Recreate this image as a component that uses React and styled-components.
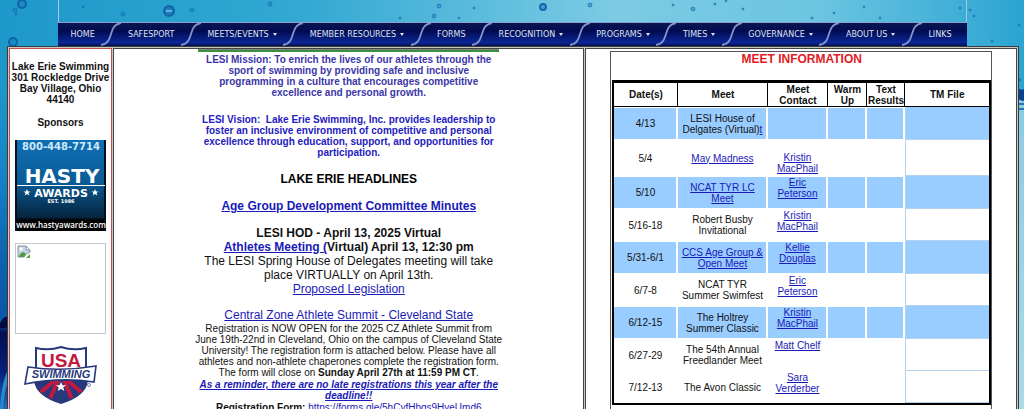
import React from "react";
import styled, { createGlobalStyle } from "styled-components";

const GlobalStyle = createGlobalStyle`
    * {
        box-sizing: border-box;
    }
    html {
        scrollbar-width: none;
    }
    body {
        margin: 0;
        background: #8fcbe4;
        font-family: "Liberation Sans", Arial, sans-serif;
        font-size: 10px;
        line-height: 11px;
        color: #111;
    }
    a {
        color: #1a1ab8;
    }
`;

const Page = styled.div`
    position: relative;
    min-height: 100vh;
    overflow: hidden;
`;

const Water = styled.svg`
    position: absolute;
    inset: 0;
    width: 100%;
    height: 409px;
    z-index: -1;
`;

const Banner = styled.header`
    height: 22px;
    margin: 0 57px 0 58px;
    border: solid #a9c4e4;
    border-width: 0 1px;
`;

const Nav = styled.nav`
    display: flex;
    height: 24px;
    margin: 0 57px 0 58px;
    padding: 0 12px 0 9px;
    border-top: 1px solid #8d9fd0;
    background: linear-gradient(#0a1650, #020b52 35%, #0a2796 85%, #03104c);
`;

const NavLink = styled.a`
    flex: 1 1 auto;
    display: flex;
    align-items: center;
    justify-content: center;
    gap: 4px;
    color: #dfe3f3;
    font-family: "DejaVu Sans", Verdana, sans-serif;
    font-size: 8px;
    text-decoration: none;
    white-space: nowrap;
`;

const Caret = styled.span`
    border: solid transparent;
    border-width: 3px 2px 0;
    border-top-color: #dfe3f3;
`;

const Divider = styled.svg`
    flex: none;
    width: 20px;
    height: 23px;
    margin: 0 3px;
`;

const Frame = styled.div`
    display: grid;
    grid-template-columns: 103px minmax(0, 472fr) minmax(0, 432fr);
    gap: 1px;
    margin: 0 5px 0 7px;
    padding: 1px;
    border: 1px solid #3a3a3a;
    background: #c9c9c2;
`;

const Column = styled.div`
    background: #fff;
    border: 1px solid ${({ $color }) => $color || "#444"};
    text-align: center;
`;

const Sidebar = styled(Column)`
    display: flex;
    flex-direction: column;
    align-items: center;
    padding-top: 12px;
`;

const Address = styled.address`
    font-style: normal;
    font-weight: bold;
    white-space: nowrap;
`;

const SponsorTitle = styled.h2`
    margin: 12px 0;
    font-size: 10px;
    line-height: 11px;
`;

const Sponsor = styled.a`
    display: block;
    width: 91px;
    height: 91px;
    margin-bottom: 12px;
`;

const Missing = styled(Sponsor)`
    border: 1px solid #c3c6cc;
    padding: 1px;
    text-align: left;
`;

const News = styled(Column)`
    display: flex;
    flex-direction: column;
    align-items: center;
    white-space: nowrap;
`;

const Rule = styled.hr`
    width: 301px;
    height: 3px;
    margin: 0;
    border: solid #7d8a7a;
    border-width: 1px 0 0;
    background: #3c9040;
`;

const Statement = styled.p`
    margin: 2px 0 14px;
    color: ${({ $color }) => $color};
    font-weight: bold;
`;

const Headline = styled.h2`
    margin: 0 0 13px;
    color: #000;
    font-size: 12px;
    line-height: 14px;
`;

const Lead = styled.p`
    margin: ${({ $gap }) => $gap || "0"} 0 0;
    font-size: 12px;
    line-height: 14px;
`;

const Body = styled.p`
    margin: 1px 0 0;
    line-height: 11px;
`;

const Meets = styled(Column)`
    padding: 2px 24px 0;
`;

const MeetBox = styled.section`
    border: 1px solid #555;
    padding: 0 0 8px 1px;
`;

const MeetTitle = styled.h2`
    margin: 0 0 14px;
    color: #e31b23;
    font-size: 12px;
    line-height: 14px;
`;

const Table = styled.table`
    width: 100%;
    table-layout: fixed;
    border: 3px solid #000;
    border-width: 3px 2px 2px;
    border-spacing: 0;
`;

const Th = styled.th`
    width: ${({ $w }) => $w};
    height: 24px;
    padding: 0;
    border: solid #000;
    border-width: 0 1px 1px 0;
    &:last-child {
        border-right-width: 0;
    }
`;

const Row = styled.tr`
    height: ${({ $tall, $blue }) => ($tall ? "36px" : $blue ? "33px" : "32px")};
    td {
        background: ${({ $blue }) => ($blue ? "#99ccff" : "#fff")};
    }
`;

const Td = styled.td`
    padding: 0;
    vertical-align: ${({ $top }) => ($top ? "top" : "middle")};
    border: solid #fff;
    border-width: 1px 2px 1px 0;
    white-space: nowrap;
`;

const FileTd = styled.td`
    padding: 0;
    border: solid #b5d2ec;
    border-width: 0 0 1px 1px;
`;

const links = [
    { label: "HOME" },
    { label: "SAFESPORT" },
    { label: "MEETS/EVENTS", menu: true },
    { label: "MEMBER RESOURCES", menu: true },
    { label: "FORMS" },
    { label: "RECOGNITION", menu: true },
    { label: "PROGRAMS", menu: true },
    { label: "TIMES", menu: true },
    { label: "GOVERNANCE", menu: true },
    { label: "ABOUT US", menu: true },
    { label: "LINKS" },
];

const meets = [
    { date: "4/13", name: ["LESI House of", "Delgates (Virtual)"], tail: "t" },
    { date: "5/4", name: ["May Madness"], href: true, contact: ["", "Kristin", "MacPhail"] },
    { date: "5/10", name: ["NCAT TYR LC", "Meet"], href: true, contact: ["Eric", "Peterson"] },
    { date: "5/16-18", name: ["Robert Busby", "Invitational"], contact: ["Kristin", "MacPhail"] },
    { date: "5/31-6/1", name: ["CCS Age Group &", "Open Meet"], href: true, contact: ["Kellie", "Douglas"] },
    { date: "6/7-8", name: ["NCAT TYR", "Summer Swimfest"], contact: ["Eric", "Peterson"] },
    { date: "6/12-15", name: ["The Holtrey", "Summer Classic"], contact: ["Kristin", "MacPhail"] },
    { date: "6/27-29", name: ["The 54th Annual", "Freedlander Meet"], contact: ["Matt Chelf"] },
    { date: "7/12-13", name: ["The Avon Classic"], contact: ["Sara", "Verderber"] },
];

// x, y, radius
const bubbles = [
    [22, 4, 4], [15, 10, 2], [16, 14, 1], [13, 42, 4], [83, 7, 1], [123, 14, 2], [169, 11, 5],
    [192, 10, 2], [270, 4, 2], [400, 18, 1], [434, 16, 2], [439, 6, 2], [459, 18, 1], [474, 8, 1],
    [543, 7, 3], [590, 5, 2], [673, 5, 1], [693, 9, 2], [715, 4, 1], [726, 1, 1], [743, 9, 1],
    [812, 18, 1], [834, 13, 1], [864, 7, 1], [880, 18, 1], [960, 8, 1], [970, 10, 1], [974, 16, 1],
    [992, 41, 1], [1019, 25, 1], [1020, 80, 1],
];

const WaterArt = () => (
    <Water viewBox="0 0 1024 409" preserveAspectRatio="none" aria-hidden="true">
        <defs>
            <linearGradient id="sea" x1="0" x2="1" y1="0" y2="0">
                <stop offset="0" stopColor="#1e98ca" />
                <stop offset="0.3" stopColor="#33a9d3" />
                <stop offset="0.6" stopColor="#7ccbe4" />
                <stop offset="0.8" stopColor="#6cc5e1" />
                <stop offset="1" stopColor="#2ba4d2" />
            </linearGradient>
            <linearGradient id="deep" x1="0" x2="0" y1="0" y2="1">
                <stop offset="0.1" stopColor="#1e98ca" />
                <stop offset="0.35" stopColor="#1683c6" />
                <stop offset="0.6" stopColor="#0c62ae" />
                <stop offset="0.76" stopColor="#0a57a8" />
                <stop offset="0.79" stopColor="#04104f" />
                <stop offset="0.9" stopColor="#05207c" />
                <stop offset="1" stopColor="#1a6fbe" />
            </linearGradient>
            <linearGradient id="shore" x1="0" x2="0" y1="0" y2="1">
                <stop offset="0" stopColor="#8acbe2" />
                <stop offset="1" stopColor="#a9dbe9" />
            </linearGradient>
        </defs>
        <rect width="1024" height="409" fill="url(#sea)" />
        <rect y="46" width="8" height="363" fill="url(#deep)" />
        <path d="M0 323Q5 315 8 317V328H0Z" fill="#030b40" />
        <path d="M0 409Q2 380 8 370V382Q4 392 3 409Z" fill="#2b86cf" />
        <rect x="1018" y="100" width="6" height="309" fill="url(#shore)" />
        <path d="M1018 88Q1021 91 1024 89V101Q1020 101 1018 98Z" fill="#0a3f96" />
        <path d="M1018 104H1024M1018 109H1024" stroke="#1e78bc" strokeWidth="2" />
        {bubbles.map(([x, y, r]) => (
            <circle key={`${x}-${y}`} cx={x} cy={y} r={r} fill="#1b7dbb" fillOpacity={r > 4 ? 1 : 0.5} stroke="#0e5fa6" strokeWidth={r > 2 ? 2 : 1} strokeOpacity={r > 2 ? 0.9 : 0.55} />
        ))}
        <path d="M166 11H172" stroke="#7cc4ea" strokeWidth="1.5" />
    </Water>
);

const Curve = () => (
    <Divider viewBox="0 0 20 23" aria-hidden="true">
        <path d="M0 22C14 20 6 2 20 0" fill="none" stroke="#8795c8" strokeWidth="1.8" />
    </Divider>
);

const HastyLogo = () => (
    <svg width="91" height="91" viewBox="0 0 91 91" role="img" aria-label="Hasty Awards">
        <defs>
            <linearGradient id="hasty" x1="0" x2="0" y1="0" y2="1">
                <stop offset="0" stopColor="#0f6fb4" />
                <stop offset="0.45" stopColor="#0b5d98" />
                <stop offset="0.85" stopColor="#06253f" />
                <stop offset="0.88" stopColor="#000" />
            </linearGradient>
        </defs>
        <rect width="91" height="91" fill="#04101c" />
        <rect x="2" width="87" height="91" fill="url(#hasty)" />
        <g fill="#fff" textAnchor="middle" fontFamily="DejaVu Sans, sans-serif">
            <text x="46" y="10" fontSize="10" fontWeight="bold" fill="#cfe8fa">800-448-7714</text>
            <text x="47" y="43" fontSize="20" fontWeight="bold">HASTY</text>
            <rect x="2" y="45" width="88" height="1" />
            <text x="46" y="57" fontSize="11" fontWeight="bold">AWARDS</text>
            <text x="46" y="63" fontSize="5" fontWeight="bold">EST. 1986</text>
            <path d="M12 49l1 2.500h2.500l-2 1.600.8 2.500-2.300-1.500-2.300 1.500.8-2.500-2-1.600h2.500zM80 49l1 2.500h2.500l-2 1.600.8 2.500-2.300-1.500-2.300 1.500.8-2.500-2-1.600h2.500z" />
            <text x="46" y="88" fontSize="8" fontFamily="Open Sans, sans-serif" fontWeight="600">www.hastyawards.com</text>
        </g>
    </svg>
);

const BrokenImage = () => (
    <svg width="14" height="14" viewBox="0 0 14 14" aria-hidden="true">
        <path d="M1 1H9L13 5V7L9 9 7 12H1Z" fill="#c5d8f2" stroke="#8a9099" />
        <path d="M9 1V5H13Z" fill="#fff" stroke="#8a9099" />
        <path d="M2 12Q3 7 7 7L9 9 7 12ZM13 9V13H9Z" fill="#4fa045" />
        <circle cx="4" cy="4" r="1.500" fill="#fff" />
    </svg>
);

const UsaLogo = () => (
    <svg width="74" height="58" viewBox="0 0 74 58" role="img" aria-label="USA Swimming">
        <defs>
            <clipPath id="shield">
                <path d="M11 35H63Q62 49 37 56Q12 49 11 35Z" />
            </clipPath>
        </defs>
        <path d="M12 2Q25 5 37 1Q49 5 62 2V24H12Z" fill="#fff" stroke="#27397a" strokeWidth="2" />
        <path d="M10 34H64Q63 50 37 58Q11 50 10 34Z" fill="#27397a" />
        <g clipPath="url(#shield)" stroke="#c4193f" strokeWidth="4">
            <path d="M31 34L10 52M34 34L24 58M40 34L50 58M43 34L64 52" />
        </g>
        <path d="M37 36l1.500 3.300h3.500l-2.700 2.300 1 3.500-3.300-2-3.300 2 1-3.500-2.700-2.300h3.500z" fill="#fff" />
        <path d="M4 21Q37 26 72 20L70 36Q37 31 1 38Z" fill="#fff" stroke="#27397a" strokeWidth="1.600" />
        <g textAnchor="middle" fontFamily="Liberation Sans, Arial, sans-serif" fontWeight="bold">
            <text x="37" y="21" fontSize="19" fill="#c4193f">USA</text>
            <text x="37" y="32" fontSize="11" fontStyle="italic" fill="#27397a">SWIMMING</text>
        </g>
        <circle cx="65" cy="39" r="1.500" fill="none" stroke="#27397a" strokeWidth="0.600" />
    </svg>
);

const Lines = ({ text }) =>
    text.map((line, i) => (
        <React.Fragment key={i}>
            {i > 0 && <br />}
            {line}
        </React.Fragment>
    ));

const NavBar = () => (
    <Nav>
        {links.map(({ label, menu }, i) => (
            <React.Fragment key={label}>
                {i > 0 && <Curve />}
                <NavLink href="#">
                    {label}
                    {menu && <Caret />}
                </NavLink>
            </React.Fragment>
        ))}
    </Nav>
);

const MeetTable = () => (
    <Table>
        <thead>
            <tr>
                <Th $w="64px">Date(s)</Th>
                <Th $w="90px">Meet</Th>
                <Th $w="60px">Meet<br />Contact</Th>
                <Th $w="39px">Warm<br />Up</Th>
                <Th $w="38px">Text<br />Results</Th>
                <Th>TM File</Th>
            </tr>
        </thead>
        <tbody>
            {meets.map(({ date, name, href, tail, contact }, i) => (
                <Row key={date} $blue={i % 2 === 0 && i < 8} $tall={i === 1}>
                    <Td>{date}</Td>
                    <Td>
                        {href ? <a href="#"><Lines text={name} /></a> : <Lines text={name} />}
                        {tail && <a href="#">{tail}</a>}
                    </Td>
                    <Td $top>{contact && <a href="#"><Lines text={contact} /></a>}</Td>
                    <Td />
                    <Td />
                    <FileTd />
                </Row>
            ))}
        </tbody>
    </Table>
);

const App = () => {
    return (
        <Page>
            <GlobalStyle />
            <WaterArt />
            <Banner />
            <NavBar />
            <Frame>
                <Sidebar $color="#c0504d">
                    <Address>
                        Lake Erie Swimming<br />
                        301 Rockledge Drive<br />
                        Bay Village, Ohio<br />
                        44140
                    </Address>
                    <SponsorTitle>Sponsors</SponsorTitle>
                    <Sponsor href="#"><HastyLogo /></Sponsor>
                    <Missing href="#"><BrokenImage /></Missing>
                    <a href="#"><UsaLogo /></a>
                </Sidebar>
                <News>
                    <Rule />
                    <Statement $color="#3b36a8">
                        LESI Mission: To enrich the lives of our athletes through the<br />
                        sport of swimming by providing safe and inclusive<br />
                        programming in a culture that encourages competitive<br />
                        excellence and personal growth.
                    </Statement>
                    <Statement $color="#2420c0">
                        LESI Vision: &nbsp;Lake Erie Swimming, Inc. provides leadership to<br />
                        foster an inclusive environment of competitive and personal<br />
                        excellence through education, support, and opportunities for<br />
                        participation.
                    </Statement>
                    <Headline>LAKE ERIE HEADLINES</Headline>
                    <Headline><a href="#">Age Group Development Committee Minutes</a></Headline>
                    <Lead>
                        <b>LESI HOD - April 13, 2025 Virtual</b><br />
                        <b><a href="#">Athletes Meeting (</a>Virtual) April 13, 12:30 pm</b><br />
                        The LESI Spring House of Delegates meeting will take<br />
                        place VIRTUALLY on April 13th.<br />
                        <a href="#">Proposed Legislation</a>
                    </Lead>
                    <Lead $gap="12px"><a href="#">Central Zone Athlete Summit - Cleveland State</a></Lead>
                    <Body>
                        Registration is NOW OPEN for the 2025 CZ Athlete Summit from<br />
                        June 19th-22nd in Cleveland, Ohio on the campus of Cleveland State<br />
                        University! The registration form is attached below. Please have all<br />
                        athletes and non-athlete chaperones complete the registration form.<br />
                        The form will close on <b>Sunday April 27th at 11:59 PM CT</b>.
                    </Body>
                    <Body>
                        <a href="#"><b><i>As a reminder, there are no late registrations this year after the<br />deadline!!</i></b></a>
                    </Body>
                    <Body>
                        <b>Registration Form:</b> <a href="#">https://forms.gle/5hCyfHbgs9HyeUmd6</a>
                    </Body>
                </News>
                <Meets>
                    <MeetBox>
                        <MeetTitle>MEET INFORMATION</MeetTitle>
                        <MeetTable />
                    </MeetBox>
                </Meets>
            </Frame>
        </Page>
    );
};

export default App;
